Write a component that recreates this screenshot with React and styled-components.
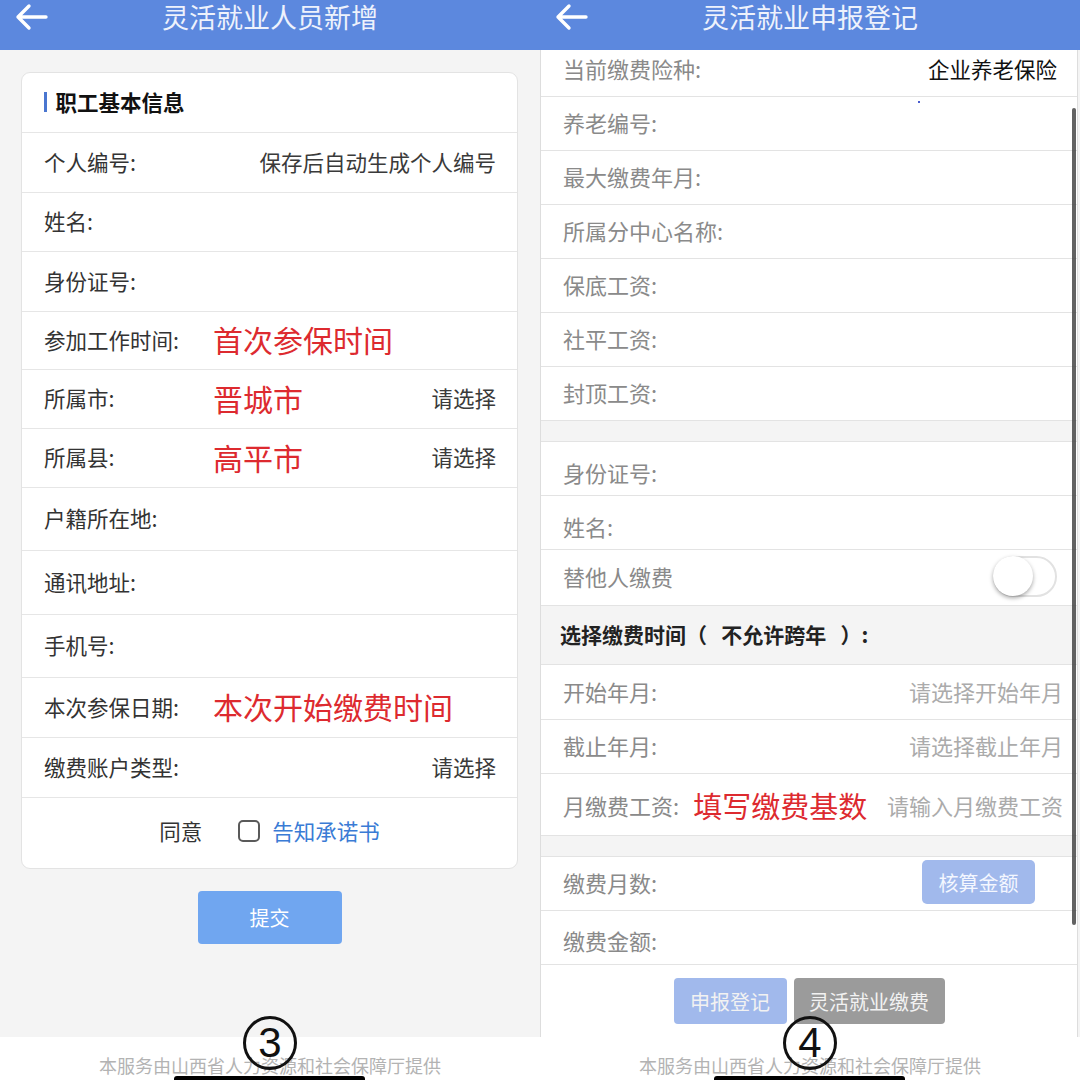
import styled, { createGlobalStyle } from "styled-components";

const GlobalStyle = createGlobalStyle`
  * { box-sizing: border-box; }
  body {
    margin: 0;
    font-family: "Noto Sans CJK SC", "Noto Sans", sans-serif;
  }
`;

const BackArrow = () => (
  <svg width="34" height="28" viewBox="0 0 34 28">
    <path
      d="M32 14H4M15 3L4 14l11 11"
      fill="none"
      stroke="#ffffff"
      strokeWidth="3.4"
      strokeLinecap="round"
      strokeLinejoin="round"
    />
  </svg>
);

const Screen = ({ title, num, children }) => (
  <Phone>
    <Header>
      <Back>
        <BackArrow />
      </Back>
      <Title>{title}</Title>
    </Header>
    {children}
    <Footer>本服务由山西省人力资源和社会保障厅提供</Footer>
    <StepBadge>{num}</StepBadge>
    <HomeBar />
  </Phone>
);

const leftRows = [
  { label: "个人编号:", value: "保存后自动生成个人编号", h: 60 },
  { label: "姓名:", h: 59 },
  { label: "身份证号:", h: 60 },
  { label: "参加工作时间:", mark: "首次参保时间", h: 58 },
  { label: "所属市:", mark: "晋城市", value: "请选择", h: 59 },
  { label: "所属县:", mark: "高平市", value: "请选择", h: 59 },
  { label: "户籍所在地:", h: 63 },
  { label: "通讯地址:", h: 64 },
  { label: "手机号:", h: 63 },
  { label: "本次参保日期:", mark: "本次开始缴费时间", h: 60 },
  { label: "缴费账户类型:", value: "请选择", h: 60 },
];

const App = () => {
  return (
    <>
      <GlobalStyle />
      <Page>
        <Screen title="灵活就业人员新增" num="3">
          <LeftBody>
            <Card>
              <CardHead>
                <Accent />
                职工基本信息
              </CardHead>
              {leftRows.map((r) => (
                <FormRow key={r.label} $h={r.h}>
                  <FormLabel>{r.label}</FormLabel>
                  {r.mark && <Mark>{r.mark}</Mark>}
                  {r.value && <FormValue>{r.value}</FormValue>}
                </FormRow>
              ))}
              <AgreeRow>
                <span>同意</span>
                <Check />
                <Link>告知承诺书</Link>
              </AgreeRow>
            </Card>
            <Submit>提交</Submit>
          </LeftBody>
        </Screen>

        <Screen title="灵活就业申报登记" num="4">
          <RightBody>
            <Column>
              <Section>
                <InfoRow $h={47} $pb={10}>
                  <InfoLabel>当前缴费险种:</InfoLabel>
                  <Value $dark>企业养老保险</Value>
                  <Dot />
                </InfoRow>
                <InfoRow>
                  <InfoLabel>养老编号:</InfoLabel>
                </InfoRow>
                <InfoRow>
                  <InfoLabel>最大缴费年月:</InfoLabel>
                </InfoRow>
                <InfoRow>
                  <InfoLabel>所属分中心名称:</InfoLabel>
                </InfoRow>
                <InfoRow>
                  <InfoLabel>保底工资:</InfoLabel>
                </InfoRow>
                <InfoRow>
                  <InfoLabel>社平工资:</InfoLabel>
                </InfoRow>
                <InfoRow>
                  <InfoLabel>封顶工资:</InfoLabel>
                </InfoRow>
              </Section>
              <Gap />
              <Section $top>
                <InfoRow $pt={10}>
                  <InfoLabel>身份证号:</InfoLabel>
                </InfoRow>
                <InfoRow $pt={10}>
                  <InfoLabel>姓名:</InfoLabel>
                </InfoRow>
                <InfoRow $h={56}>
                  <InfoLabel>替他人缴费</InfoLabel>
                  <Toggle>
                    <Knob />
                  </Toggle>
                </InfoRow>
              </Section>
              <Caption>
                选择缴费时间（&nbsp;&nbsp;&nbsp;不允许跨年&nbsp;&nbsp;&nbsp;）:
              </Caption>
              <Section $top>
                <InfoRow $h={55}>
                  <InfoLabel>开始年月:</InfoLabel>
                  <Value>请选择开始年月</Value>
                </InfoRow>
                <InfoRow>
                  <InfoLabel>截止年月:</InfoLabel>
                  <Value>请选择截止年月</Value>
                </InfoRow>
                <InfoRow $h={62} $pt={4}>
                  <InfoLabel>月缴费工资:</InfoLabel>
                  <InlineMark>填写缴费基数</InlineMark>
                  <Value>请输入月缴费工资</Value>
                </InfoRow>
              </Section>
              <Gap />
              <Section $top>
                <InfoRow>
                  <InfoLabel>缴费月数:</InfoLabel>
                  <CalcButton>核算金额</CalcButton>
                </InfoRow>
                <InfoRow $pt={8}>
                  <InfoLabel>缴费金额:</InfoLabel>
                </InfoRow>
              </Section>
              <Actions>
                <ActionButton $w={113} $bg="#a1b9ec">申报登记</ActionButton>
                <ActionButton $w={151} $bg="#9b9b9b">灵活就业缴费</ActionButton>
              </Actions>
            </Column>
          </RightBody>
          <Scrollbar />
        </Screen>
      </Page>
    </>
  );
};

const Page = styled.div`
  display: flex;
  width: 1080px;
  height: 1080px;
  overflow: hidden;
  background-color: #ffffff;
`;

const Phone = styled.div`
  position: relative;
  width: 540px;
  height: 1080px;
  display: flex;
  flex-direction: column;
  overflow: hidden;
`;

const Header = styled.div`
  flex: 0 0 50px;
  background-color: #5c88de;
  display: grid;
  grid-template-columns: 60px 1fr 60px;
  align-items: start;
`;

const Back = styled.div`
  padding: 3px 0 0 14px;
  display: flex;
`;

const Title = styled.div`
  text-align: center;
  color: #eef2fc;
  font-size: 27px;
  line-height: 34px;
`;

const Footer = styled.div`
  flex: 0 0 43px;
  background-color: #ffffff;
  padding-top: 17px;
  text-align: center;
  color: #b3b3b3;
  font-size: 18px;
  line-height: 22px;
  white-space: nowrap;
`;

const StepBadge = styled.div`
  position: absolute;
  left: 243px;
  top: 1016px;
  width: 54px;
  height: 54px;
  border: 3px solid #111111;
  border-radius: 50%;
  display: flex;
  align-items: center;
  justify-content: center;
  font-family: "Liberation Sans", Arial, sans-serif;
  font-size: 42px;
  color: #111111;
`;

const HomeBar = styled.div`
  position: absolute;
  left: 174px;
  bottom: 0;
  width: 191px;
  height: 4px;
  border-radius: 3px 3px 0 0;
  background-color: #000000;
`;

/* left screen */

const LeftBody = styled.div`
  flex: 1;
  background-color: #f4f4f4;
  padding: 22px 22px 0 21px;
  display: flex;
  flex-direction: column;
  align-items: center;
`;

const Card = styled.div`
  align-self: stretch;
  background-color: #ffffff;
  border: 1px solid #e3e3e3;
  border-radius: 9px;
`;

const CardHead = styled.div`
  height: 59px;
  display: flex;
  align-items: center;
  padding: 0 0 2px 22px;
  font-size: 21.5px;
  font-weight: bold;
  color: #111111;
`;

const Accent = styled.div`
  width: 2.5px;
  height: 20px;
  background-color: #4a76d0;
  margin-right: 9px;
`;

const FormRow = styled.div`
  height: ${(props) => props.$h}px;
  border-top: 1px solid #e6e6e6;
  display: flex;
  align-items: center;
  padding: 0 21px 3px 22px;
  font-size: 21.5px;
  color: #333333;
  white-space: nowrap;
`;

const FormLabel = styled.div`
  flex: 0 0 169px;
`;

const Mark = styled.div`
  color: #dd2a2f;
  font-size: 30px;
  line-height: 36px;
`;

const FormValue = styled.div`
  margin-left: auto;
  color: #3a3a3a;
`;

const AgreeRow = styled.div`
  height: 71px;
  border-top: 1px solid #e6e6e6;
  display: flex;
  align-items: center;
  justify-content: center;
  padding-bottom: 5px;
  font-size: 21.5px;
  color: #333333;
`;

const Check = styled.div`
  width: 22px;
  height: 22px;
  border: 2px solid #5a5a5a;
  border-radius: 5px;
  margin: 0 12px 0 36px;
`;

const Link = styled.span`
  color: #3a7bd5;
`;

const Submit = styled.button`
  margin-top: 22px;
  width: 144px;
  height: 53px;
  border: none;
  border-radius: 4px;
  background-color: #70a6f0;
  color: #ffffff;
  font-family: inherit;
  font-size: 20px;
`;

/* right screen */

const RightBody = styled.div`
  flex: 1;
  background-color: #f4f4f4;
  display: flex;
  flex-direction: column;
`;

const Column = styled.div`
  flex: 1;
  display: flex;
  flex-direction: column;
  margin-right: 2px;
  border-left: 1px solid #dddddd;
  border-right: 1px solid #dddddd;
`;

const Section = styled.div`
  background-color: #ffffff;
  border-top: ${(props) => (props.$top ? "1px solid #e3e3e3" : "none")};
`;

const Gap = styled.div`
  height: 20px;
`;

const InfoRow = styled.div`
  position: relative;
  height: ${(props) => props.$h || 54}px;
  border-bottom: 1px solid #e3e3e3;
  display: flex;
  align-items: center;
  padding: ${(props) => props.$pt || 0}px 14px ${(props) => props.$pb ?? 3}px 22px;
  font-size: 22px;
  white-space: nowrap;
`;

const InfoLabel = styled.div`
  color: #8a8a8a;
`;

const Value = styled.div`
  margin-left: auto;
  margin-right: ${(props) => (props.$dark ? 6 : 0)}px;
  color: ${(props) => (props.$dark ? "#111111" : "#ababab")};
  font-size: ${(props) => (props.$dark ? 21.5 : 22)}px;
`;

const Dot = styled.span`
  position: absolute;
  left: 377px;
  bottom: -7px;
  width: 2px;
  height: 2px;
  background-color: #4a5ccf;
`;

const InlineMark = styled.div`
  margin-left: 14px;
  color: #dd2a2f;
  font-size: 29px;
  line-height: 36px;
`;

const Toggle = styled.div`
  margin: 0 6px 0 auto;
  width: 64px;
  height: 41px;
  border: 2px solid #e2e2e2;
  border-radius: 21px;
  background-color: #ffffff;
  display: flex;
  align-items: center;
`;

const Knob = styled.div`
  width: 40px;
  height: 40px;
  margin-left: -2px;
  border-radius: 50%;
  background-color: #ffffff;
  box-shadow: 0 2px 4px rgba(0, 0, 0, 0.35);
`;

const Caption = styled.div`
  height: 58px;
  display: flex;
  align-items: center;
  padding: 0 0 2px 19px;
  font-size: 21px;
  font-weight: bold;
  color: #222222;
  white-space: nowrap;
`;

const CalcButton = styled.div`
  margin: 0 28px 0 auto;
  width: 113px;
  height: 44px;
  border-radius: 5px;
  background-color: #a1b9ec;
  color: #f4f7ff;
  font-size: 20px;
  display: flex;
  align-items: center;
  justify-content: center;
`;

const Actions = styled.div`
  flex: 1;
  background-color: #ffffff;
  display: flex;
  justify-content: center;
  align-items: flex-start;
  gap: 7px;
  padding-top: 13px;
`;

const ActionButton = styled.div`
  width: ${(props) => props.$w}px;
  height: 46px;
  border-radius: 4px;
  background-color: ${(props) => props.$bg};
  color: #f2f2f2;
  font-size: 20px;
  display: flex;
  align-items: center;
  justify-content: center;
`;

const Scrollbar = styled.div`
  position: absolute;
  left: 532px;
  top: 108px;
  width: 3.5px;
  height: 817px;
  border-radius: 2px;
  background-color: rgba(70, 70, 70, 0.85);
`;

export default App;
